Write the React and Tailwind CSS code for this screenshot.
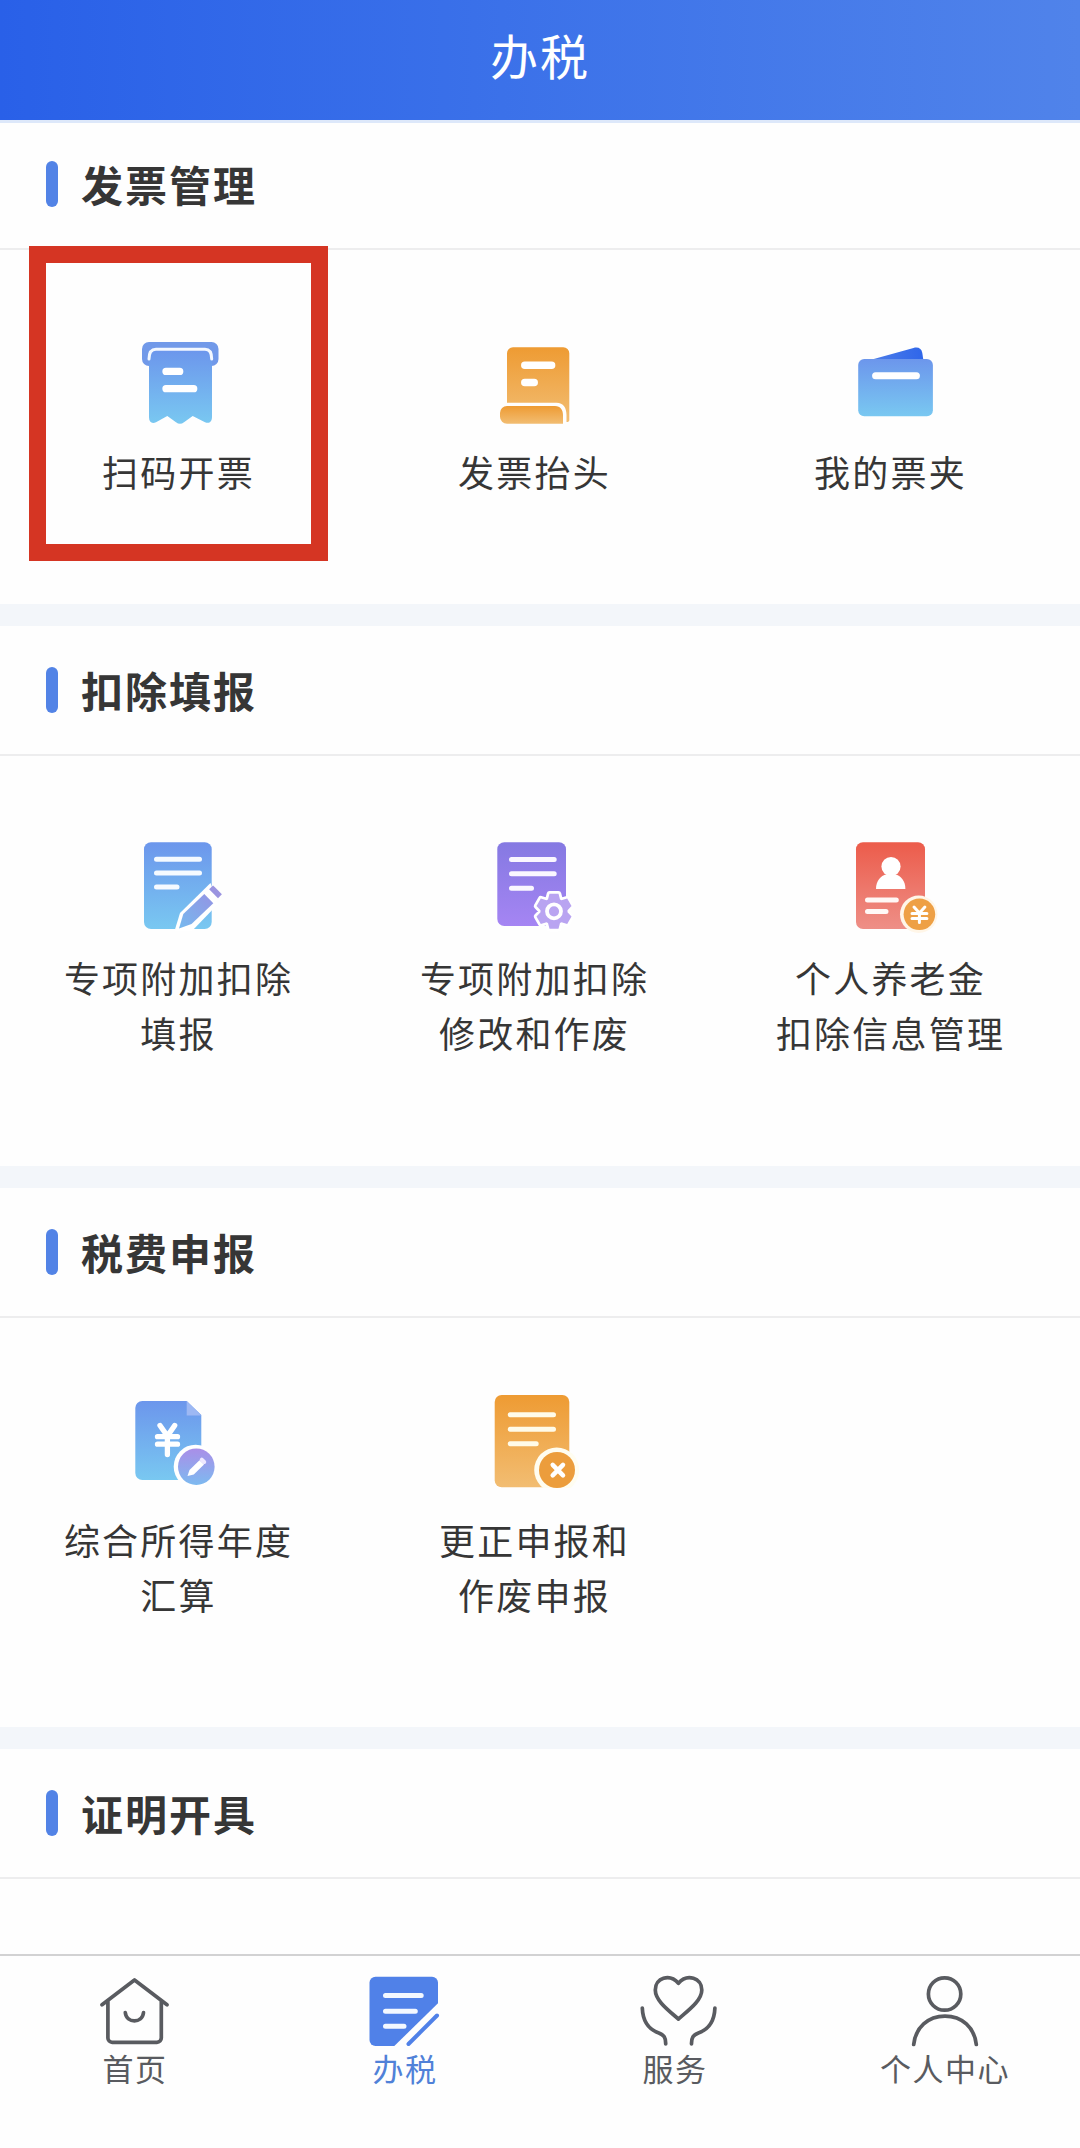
import React from 'react';

const Gradients = () => (
  <svg width="0" height="0" className="absolute" aria-hidden="true">
    <defs>
      <linearGradient id="blue" x1="0" y1="0" x2="0" y2="1">
        <stop offset="0" stopColor="#6c96ec" />
        <stop offset="1" stopColor="#79c8f1" />
      </linearGradient>
      <linearGradient id="orange" x1="0" y1="0" x2="0" y2="1">
        <stop offset="0" stopColor="#ee9b33" />
        <stop offset="1" stopColor="#f2bd72" />
      </linearGradient>
      <linearGradient id="purple" x1="0" y1="0" x2="0" y2="1">
        <stop offset="0" stopColor="#8579e2" />
        <stop offset="1" stopColor="#a585f3" />
      </linearGradient>
      <linearGradient id="red" x1="0" y1="0" x2="0" y2="1">
        <stop offset="0" stopColor="#ec5c4b" />
        <stop offset="1" stopColor="#ee8f87" />
      </linearGradient>
      <linearGradient id="violet" x1="0" y1="0" x2="0" y2="1">
        <stop offset="0" stopColor="#aa8ee8" />
        <stop offset="1" stopColor="#7dbaf0" />
      </linearGradient>
      <linearGradient id="pencil" x1="1" y1="0" x2="0" y2="1">
        <stop offset="0" stopColor="#9494e4" />
        <stop offset="1" stopColor="#76b9ee" />
      </linearGradient>
      <linearGradient id="flap" x1="0" y1="0" x2="1" y2="0">
        <stop offset="0" stopColor="#4f7fe8" />
        <stop offset="1" stopColor="#2f66ea" />
      </linearGradient>
    </defs>
  </svg>
);

const Icon = ({ children }) => (
  <svg viewBox="0 0 120 120" className="w-[120px] h-[120px]" fill="none" strokeLinecap="round" strokeLinejoin="round">
    {children}
  </svg>
);

const ReceiptIcon = () => (
  <Icon>
    <rect x="24" y="17" width="76.5" height="24" rx="7" fill="#7199e9" />
    <path d="M31 33V29a4 4 0 0 1 4-4H90a4 4 0 0 1 4 4V92c0 5-3 7-7 5.2L74.7 91 66 97.3q-4 3-8 0L49.3 91 38 97.2c-4 1.8-7 0-7-5z" fill="url(#blue)" />
    <path d="M31 34c0-6.500 2.700-9.800 7-9.800H87c4.300 0 6.700 3.300 6.700 9.800" stroke="#f3f8ff" strokeWidth="3" />
    <path d="M48 46.4H61.7M48 63.7H75.7" stroke="#fff" strokeWidth="7.3" />
  </Icon>
);

const ScrollIcon = () => (
  <Icon>
    <path d="M39 22.3H89.3a6 6 0 0 1 6 6V95q0 2-2.8 2V90c0-7-3-12.3-10-12.3H33V28.3a6 6 0 0 1 6-6z" fill="url(#orange)" />
    <path d="M33 81H81c5.5 0 8 4 8 9v8.7H33a7 7 0 0 1-7-7V88a7 7 0 0 1 7-7z" fill="url(#orange)" />
    <path d="M50.8 40.2H77.6M50.8 57.4H60.2" stroke="#fff" strokeWidth="7.5" />
  </Icon>
);

const WalletIcon = () => (
  <Icon>
    <path d="M36.5 36 83.500 23c5-1.3 8 .8 8.8 5L93.5 36z" fill="url(#flap)" />
    <rect x="28.2" y="34" width="74.7" height="57.3" rx="6" fill="url(#blue)" />
    <path d="M45.6 50.8H86.4" stroke="#fff" strokeWidth="7" />
  </Icon>
);

const FillIcon = () => (
  <Icon>
    <rect x="26" y="11.3" width="67.7" height="86.7" rx="7" fill="url(#blue)" />
    <path d="M38.5 28.3H81.5M38.5 42H81.5M38.5 56H59" stroke="#f5faff" strokeWidth="5" />
    <path d="M92.5 52 62 82 56.500 100H74L100 73z" fill="#fff" />
    <path d="M86.3 63 95.3 72.3 73.5 93 61 97.5 65.3 83z" fill="url(#pencil)" />
    <path d="M95 58.3 100 63.3" stroke="#9b94e0" strokeWidth="5.5" strokeLinecap="square" />
  </Icon>
);

const GearDocIcon = () => (
  <Icon>
    <rect x="23.3" y="11.3" width="68.7" height="83.7" rx="7" fill="url(#purple)" />
    <path d="M37.5 28.5H80.2M37.5 42.7H80.2M37.5 57.3H57.5" stroke="#faf7ff" strokeWidth="5" />
    <g transform="translate(80 80.3)">
      <path
        d="M-4.500-17.500H4.500L6-11.800 7.500-11 13.200-12.700 17.500-5.200 13.500-1V1L17.500 5.200 13.200 12.700 7.500 11 6 11.800 4.500 17.500H-4.500L-6 11.800-7.500 11-13.200 12.700-17.500 5.200-13.500 1V-1L-17.500-5.200-13.200-12.700-7.500-11-6-11.800z"
        fill="#b9a4f1"
        stroke="#fff"
        strokeWidth="5.5"
        paintOrder="stroke"
      />
      <circle r="7" stroke="#fff" strokeWidth="3.8" />
    </g>
  </Icon>
);

const PensionIcon = () => (
  <Icon>
    <rect x="26" y="11.3" width="69" height="86.7" rx="7" fill="url(#red)" />
    <circle cx="61" cy="35.5" r="9.6" fill="#fff" />
    <path d="M46 58c0-8 4.500-13.300 10.500-14.700h8.600C71 44.700 75.400 50 75.400 58z" fill="#fff" />
    <path d="M37.5 69H66.3M37.5 80.6H56" stroke="#fff8f6" strokeWidth="5" />
    <circle cx="88.7" cy="83.300" r="18.700" fill="#fff6e8" />
    <circle cx="89.4" cy="83.3" r="15.8" fill="#eea045" />
    <path d="M84 76 89.400 82 94.900 76M89.400 82V91.500M82 82.500H96.900M82 87.500H96.900" stroke="#fff" strokeWidth="3" />
  </Icon>
);

const YearlyIcon = () => (
  <Icon>
    <path d="M24.3 8H68.7L83.3 22V87H24.3a7 7 0 0 1-7-7V15a7 7 0 0 1 7-7z" fill="url(#blue)" />
    <path d="M68.7 8 83.3 22.5H68.7z" fill="#9db8f3" />
    <path d="M42 32.5 49.4 43 56.7 32.5M49.4 43V61.5M39.5 43.7H59.5M39.5 51.2H59.5" stroke="#fff" strokeWidth="5.3" />
    <circle cx="77.7" cy="73.7" r="22" fill="#fff" />
    <circle cx="78.3" cy="73.7" r="18.3" fill="url(#violet)" />
    <path d="M69.5 83 71.5 77 81.5 67.2 86 71.5 75.8 81.5z" fill="#fff" />
    <path d="M83.8 66.7 86.2 69" stroke="#efe8ff" strokeWidth="4" />
  </Icon>
);

const CorrectIcon = () => (
  <Icon>
    <rect x="20.7" y="2" width="74.6" height="92.3" rx="7" fill="url(#orange)" />
    <path d="M36.2 21.7H79.5M36.2 36.3H79.5M36.2 50.7H62.2" stroke="#fffbe9" strokeWidth="5" />
    <clipPath id="badge">
      <rect x="50" y="50" width="60" height="44.9" />
    </clipPath>
    <g clipPath="url(#badge)">
      <circle cx="82.7" cy="77" r="22.5" fill="#fffdf0" />
      <circle cx="83" cy="77" r="18" fill="#ec9d3c" />
    </g>
    <path d="M78.7 71.8 89 82.3M89 71.8 78.700 82.3" stroke="#fff" strokeWidth="4.5" />
  </Icon>
);

const TabIcon = ({ children }) => (
  <svg viewBox="0 0 90 80" className="w-[90px] h-20" fill="none" stroke="#595b60" strokeWidth="3.7" strokeLinecap="round" strokeLinejoin="round">
    {children}
  </svg>
);

const HomeIcon = () => (
  <TabIcon>
    <path d="M12 34.8 44.5 10 77 34.8M17.9 31V68a4.3 4.3 0 0 0 4.3 4.3H67a4.3 4.3 0 0 0 4.3-4.3V31" />
    <path d="M35.3 42.6c1.2 11 17 11 18.2 0" />
  </TabIcon>
);

const TaxIcon = () => (
  <TabIcon>
    <path d="M15.5 6.7H72a6 6 0 0 1 6 6V33.3L34.3 76H15.5a6 6 0 0 1-6-6V12.7a6 6 0 0 1 6-6z" fill="#5081e8" stroke="none" />
    <path d="M77 45.5 48.5 74" stroke="#5081e8" strokeWidth="4" />
    <path d="M25.5 25.4H61.2M25.5 41.3H55.3M25.5 56.2H44" stroke="#f3f8ff" strokeWidth="5" />
  </TabIcon>
);

const ServiceIcon = () => (
  <TabIcon>
    <path d="M48.4 49C38 40 25.300 30.500 25.300 20 25.300 8 39.500 3 48.400 13.300 57.300 3 71.800 8 71.800 20 71.800 30.500 58.800 40 48.400 49z" />
    <path d="M12.3 38c.5 14 6.500 21.500 16.500 24.900 5.200 2 7 4.600 6.900 11.100M84.900 38C84.400 52 78.400 59.500 68.400 62.900 63.200 64.900 61.400 67.500 61.500 74" />
  </TabIcon>
);

const UserIcon = () => (
  <TabIcon>
    <circle cx="44.6" cy="24" r="16.2" />
    <path d="M13.7 74.500C15.500 57.500 28 46.200 45 46.200S74.500 57.500 76.300 74.500" />
  </TabIcon>
);

const sections = [
  {
    title: '发票管理',
    height: 'h-[354px]',
    items: [
      { icon: ReceiptIcon, lines: ['扫码开票'], highlighted: true },
      { icon: ScrollIcon, lines: ['发票抬头'] },
      { icon: WalletIcon, lines: ['我的票夹'] },
    ],
  },
  {
    title: '扣除填报',
    height: 'h-[410px]',
    items: [
      { icon: FillIcon, lines: ['专项附加扣除', '填报'] },
      { icon: GearDocIcon, lines: ['专项附加扣除', '修改和作废'] },
      { icon: PensionIcon, lines: ['个人养老金', '扣除信息管理'] },
    ],
  },
  {
    title: '税费申报',
    height: 'h-[409px]',
    items: [
      { icon: YearlyIcon, lines: ['综合所得年度', '汇算'] },
      { icon: CorrectIcon, lines: ['更正申报和', '作废申报'] },
    ],
  },
  { title: '证明开具', height: 'h-[75px]', items: [] },
];

const tabs = [
  { label: '首页', icon: HomeIcon },
  { label: '办税', icon: TaxIcon, active: true },
  { label: '服务', icon: ServiceIcon },
  { label: '个人中心', icon: UserIcon },
];

const MenuItem = ({ item }) => (
  <div className="relative flex flex-col items-center pt-[75px]">
    <item.icon />
    <div className="flex flex-col items-center -mt-[1.5px] pl-px">
      {item.lines.map(line => (
        <span key={line} className="text-[36px] leading-[55px] tracking-[2.2px] whitespace-nowrap">{line}</span>
      ))}
    </div>
    {item.highlighted && (
      <div className="absolute left-[29px] -top-[4px] w-[299px] h-[315px] border-[17px] border-[#d53523]"></div>
    )}
  </div>
);

const Section = ({ section }) => (
  <section>
    <div className="flex items-center h-[130px] pl-[46px] border-b-2 border-[#ededee]">
      <div className="w-3 h-[46px] rounded-full bg-[#5283e6]"></div>
      <h2 className="ml-[23px] text-[42px] leading-none font-bold tracking-[2px]">{section.title}</h2>
    </div>
    <div className={`grid grid-cols-[356px_356px_356px] ${section.height}`}>
      {section.items.map(item => (
        <MenuItem key={item.lines.join('')} item={item} />
      ))}
    </div>
  </section>
);

const App = () => {
  return (
    <div className="flex flex-col w-[1080px] h-[2148px] overflow-hidden bg-[#fefefe] text-[#363636] font-['Noto_Sans_CJK_SC',sans-serif]">
      <Gradients />
      <header className="relative flex items-center justify-center h-[120px] shrink-0 pb-[13px] bg-linear-to-r from-[#2960e8] to-[#5083ea] shadow-[0_3px_0_#dde8fa]">
        <h1 className="text-[48px] leading-none tracking-[2px] text-white">办税</h1>
      </header>

      <main className="flex flex-col gap-[22px] bg-[#f3f6fa] *:bg-[#fefefe]">
        {sections.map(section => (
          <Section key={section.title} section={section} />
        ))}
      </main>

      <nav className="grid grid-cols-4 grow border-t-2 border-[#d2d2d3] pt-[14px]">
        {tabs.map(tab => (
          <div key={tab.label} className={`flex flex-col items-center ${tab.active ? 'text-[#5081d8]' : 'text-[#595b60]'}`}>
            <tab.icon />
            <span className="text-[31px] leading-[35px] tracking-[1.5px]">{tab.label}</span>
          </div>
        ))}
      </nav>
    </div>
  );
};

export default App;
